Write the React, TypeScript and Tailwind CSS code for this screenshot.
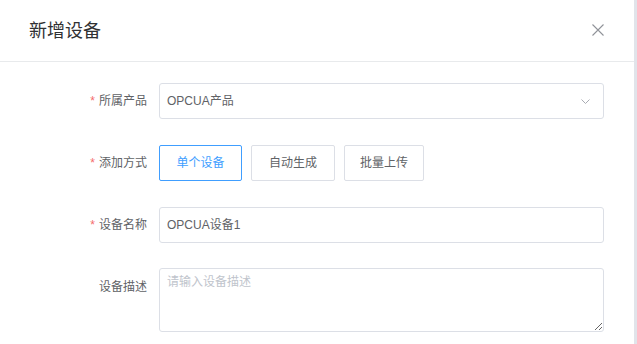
import React, { useState } from 'react';

const FONT = '"Liberation Sans", "Noto Sans CJK SC", sans-serif';

const Label: React.FC<{ text: string; required?: boolean; top?: boolean }> = ({ text, required, top }) => (
  <div className={`w-[159px] shrink-0 pr-3 flex justify-end ${top ? 'items-start pt-[10px]' : 'items-center'} text-[12px] text-[#606266]`}>
    {required && <span className="text-[#f56c6c] mr-[4px] text-[12px]">*</span>}
    <span>{text}</span>
  </div>
);

export default function App() {
  const [mode, setMode] = useState('single');
  const [name, setName] = useState('OPCUA设备1');

  const modes = [
    { key: 'single', label: '单个设备', w: 'w-[83px]' },
    { key: 'auto', label: '自动生成', w: 'w-[84px]' },
    { key: 'batch', label: '批量上传', w: 'w-[80px]' },
  ];

  return (
    <div className="w-[637px] h-[344px] overflow-hidden flex bg-white" style={{ fontFamily: FONT }}>
      <div className="flex-1 flex flex-col">
        {/* Header */}
        <div className="h-[62px] shrink-0 border-b border-[#e8eaec] flex items-center justify-between pl-[29px] pr-[30px]">
          <h2 className="text-[18px] text-[#303133] leading-none">新增设备</h2>
          <svg width="12" height="12" viewBox="0 0 12 12" className="mt-[-2px]">
            <path d="M0.5 0.5 L11.5 11.5 M11.5 0.5 L0.5 11.5" stroke="#909399" strokeWidth="1.1" />
          </svg>
        </div>

        {/* Form */}
        <div className="pt-[21px] pr-[30px] flex flex-col gap-[26px]">
          <div className="flex h-9">
            <Label text="所属产品" required />
            <div className="flex-1 border border-[#dcdfe6] rounded-[3px] flex items-center justify-between pl-[7px] pr-[13px] text-[12px] text-[#606266]">
              <span>OPCUA产品</span>
              <svg width="9" height="5" viewBox="0 0 9 5">
                <path d="M0.5 0.5 L4.5 4.5 L8.5 0.5" stroke="#a8abb2" strokeWidth="1" fill="none" />
              </svg>
            </div>
          </div>

          <div className="flex h-9">
            <Label text="添加方式" required />
            <div className="flex gap-[9px]">
              {modes.map((m) => (
                <button
                  key={m.key}
                  onClick={() => setMode(m.key)}
                  className={`${m.w} h-9 rounded-[2px] border text-[12px] flex items-center justify-center ${
                    mode === m.key ? 'border-[#409eff] text-[#409eff]' : 'border-[#dcdfe6] text-[#606266]'
                  }`}
                >
                  {m.label}
                </button>
              ))}
            </div>
          </div>

          <div className="flex h-9">
            <Label text="设备名称" required />
            <input
              value={name}
              onChange={(e) => setName(e.target.value)}
              className="flex-1 border border-[#dcdfe6] rounded-[3px] pl-[7px] text-[12px] text-[#606266] outline-none"
            />
          </div>

          <div className="flex -mt-px">
            <Label text="设备描述" top />
            <textarea
              placeholder="请输入设备描述"
              className="flex-1 h-[64px] border border-[#dcdfe6] rounded-[3px] px-[7px] py-[4px] text-[12px] text-[#606266] placeholder:text-[#c0c4cc] outline-none"
            />
          </div>
        </div>
      </div>
      <div className="w-[3px] h-full bg-[#e1e4ea]" />
    </div>
  );
}
